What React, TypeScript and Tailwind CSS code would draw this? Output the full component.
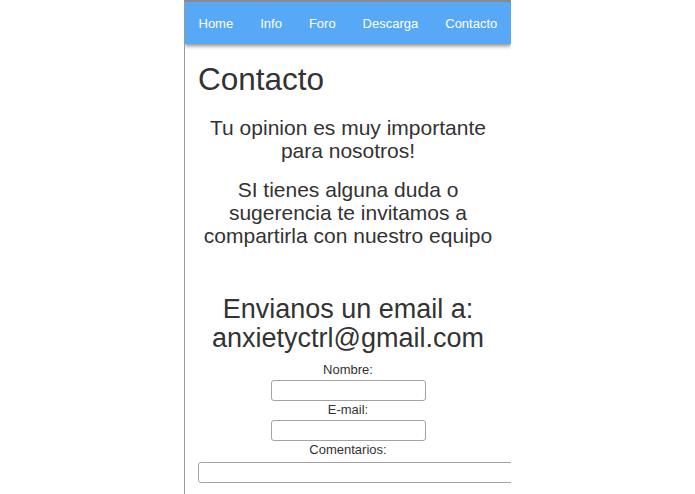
import React from "react";

export default function App() {
  const nav = ["Home", "Info", "Foro", "Descarga", "Contacto"];
  return (
    <div className="w-full h-[494px] bg-white flex justify-center overflow-hidden" style={{ fontFamily: '"Liberation Sans", Arial, sans-serif' }}>
      <div className="w-[327px] h-[494px] border-l border-l-[#9a9a9a] border-t-2 border-t-[#8a8a8a] overflow-hidden text-[#333333]">
        <nav className="h-[42px] bg-[#57a9f7] flex items-center shadow-[0_2px_4px_rgba(0,0,0,0.45)] relative">
          {nav.map((n) => (
            <a key={n} className="px-[13.5px] text-[13px] text-white leading-[15px]">
              {n}
            </a>
          ))}
        </nav>
        <div className="px-[13px]">
          <h1 className="mt-[17px] text-[31.5px] leading-[37px] font-normal">Contacto</h1>
          <p className="mt-[18px] text-center text-[21px] leading-[23px]">
            Tu opinion es muy importante para nosotros!
          </p>
          <p className="mt-[16px] text-center text-[21px] leading-[23px]">
            SI tienes alguna duda o sugerencia te invitamos a compartirla con nuestro equipo
          </p>
          <h2 className="mt-[48px] text-center text-[27px] leading-[29px] font-normal">
            Envianos un email a: anxietyctrl@gmail.com
          </h2>
          <form className="mt-[9px] flex flex-col items-center">
            <label className="text-[13px] leading-[15px]">Nombre:</label>
            <input className="mt-[3px] w-[155px] h-[21px] border border-[#a3a3a3] rounded-[3px] bg-white" />
            <label className="mt-[1px] text-[13px] leading-[15px]">E-mail:</label>
            <input className="mt-[3px] w-[155px] h-[21px] border border-[#a3a3a3] rounded-[3px] bg-white" />
            <label className="mt-[1px] text-[13px] leading-[15px]">Comentarios:</label>
            <div className="mt-[3px] self-stretch">
              <input className="w-[330px] h-[21px] border border-[#a3a3a3] rounded-[3px] bg-white" />
            </div>
          </form>
        </div>
      </div>
    </div>
  );
}
